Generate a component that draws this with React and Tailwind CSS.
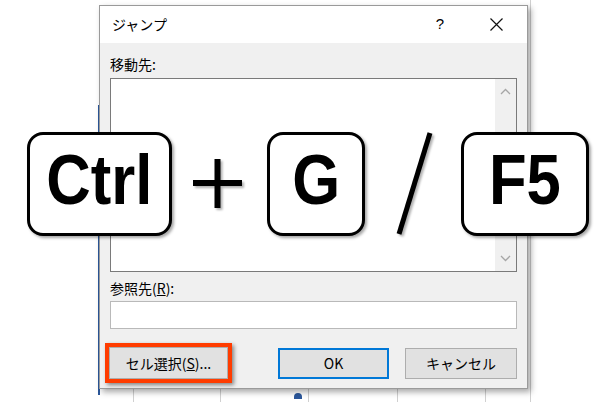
import React from 'react';

const jp = { fontFamily: '"Noto Sans CJK JP", "Noto Sans", sans-serif' };

function Key({ label, width }) {
  return (
    <div
      className="h-[104px] shrink-0 rounded-[16px] border-[3px] border-black bg-white shadow-[2px_2px_3px_rgba(0,0,0,0.35)] flex items-center justify-center"
      style={{ width }}
    >
      <span
        className="inline-block text-[70px] font-bold leading-none text-black scale-x-[0.88] -translate-y-[4px]"
        style={{ fontFamily: '"Liberation Sans", Arial, sans-serif' }}
      >
        {label}
      </span>
    </div>
  );
}

function Chevron({ up }) {
  return (
    <svg width="11" height="7" viewBox="0 0 11 7">
      <path
        d={up ? 'M1 6 L5.5 1.5 L10 6' : 'M1 1 L5.5 5.5 L10 1'}
        fill="none"
        stroke="#a6a6a6"
        strokeWidth="1.3"
      />
    </svg>
  );
}

export default function App() {
  return (
    <div className="relative w-[614px] h-[402px] overflow-hidden bg-white" style={jp}>
      {/* sheet behind the dialog */}
      <div className="absolute left-[98px] top-[105px] w-[2px] h-[290px] bg-[#2b579a]" />
      <div className="absolute left-[530px] top-0 w-px h-[402px] bg-[#d0d0d0]" />
      <div className="absolute left-[133px] top-[388px] w-px h-[14px] bg-[#d0d0d0]" />
      <div className="absolute left-[220px] top-[388px] w-px h-[14px] bg-[#d0d0d0]" />
      <div className="absolute left-[308px] top-[388px] w-px h-[14px] bg-[#d0d0d0]" />
      <div className="absolute left-[397px] top-[388px] w-px h-[14px] bg-[#d0d0d0]" />
      <div className="absolute left-[485px] top-[388px] w-px h-[14px] bg-[#d0d0d0]" />
      <div className="absolute left-[294px] top-[393px] w-[8px] h-[6px] rounded-t-full bg-[#2b579a]" />

      {/* dialog */}
      <div className="relative ml-[99px] mt-[5px] w-[429px] h-[384px] border border-[#9a9a9a] bg-[#f0f0f0] shadow-[3px_3px_6px_rgba(0,0,0,0.35)] flex flex-col">
        <div className="h-[37px] bg-white flex items-center pl-[12px] pr-[20px] text-[14px] text-black">
          <span>ジャンプ</span>
          <span className="ml-auto mr-[46px] text-[15px]" style={{ fontFamily: '"Liberation Sans", sans-serif' }}>?</span>
          <svg width="13" height="13" viewBox="0 0 13 13" className="mr-[4px]">
            <path d="M0.5 0.5 L12.5 12.5 M12.5 0.5 L0.5 12.5" stroke="#111" strokeWidth="1.2" />
          </svg>
        </div>

        <div className="flex-1 flex flex-col px-[10px] pt-[11px]">
          <div className="h-[20px] leading-[20px] text-[14px] text-black">移動先:</div>
          <div className="mt-[4px] h-[194px] border border-[#7a7a7a] bg-white flex justify-end">
            <div className="w-[21px] h-full bg-[#f0f0f0] flex flex-col items-center justify-between py-[9px]">
              <Chevron up />
              <Chevron />
            </div>
          </div>
          <div className="mt-[6px] h-[20px] leading-[20px] text-[14px] text-black">
            参照先(<span className="underline">R</span>):
          </div>
          <div className="mt-[3px] h-[28px] border border-[#b9b9b9] bg-white" />

          <div className="mt-[14px] flex items-center">
            <div className="-ml-[5px] border-[4px] border-[#ff3c00] shadow-[2px_2px_4px_rgba(0,0,0,0.45)]">
              <div className="w-[119px] h-[32px] bg-[#e1e1e1] border border-[#adadad] flex items-center justify-center text-[14px] text-black">
                セル選択(<span className="underline">S</span>)...
              </div>
            </div>
            <div className="ml-auto w-[111px] h-[31px] bg-[#e1e1e1] border-2 border-[#0078d7] flex items-center justify-center text-[14px] text-black">
              OK
            </div>
            <div className="ml-[16px] w-[112px] h-[31px] bg-[#e1e1e1] border border-[#adadad] flex items-center justify-center text-[14px] text-black">
              キャンセル
            </div>
          </div>
        </div>
      </div>

      {/* shortcut overlay */}
      <div className="absolute left-[27px] top-[131px] flex items-center">
        <Key label="Ctrl" width={145} />
        <svg width="55" height="55" viewBox="0 0 55 55" className="ml-[21px] drop-shadow-[2px_2px_1px_rgba(0,0,0,0.3)]">
          <path d="M0 26 H49 M24.5 2 V51" stroke="#000" strokeWidth="6" />
        </svg>
        <div className="ml-[19px]">
          <Key label="G" width={98} />
        </div>
        <svg width="40" height="106" viewBox="0 0 40 106" className="ml-[31px] drop-shadow-[2px_2px_1px_rgba(0,0,0,0.3)]">
          <path d="M34 2 L3 103" stroke="#000" strokeWidth="5" />
        </svg>
        <div className="ml-[25px]">
          <Key label="F5" width={128} />
        </div>
      </div>
    </div>
  );
}
